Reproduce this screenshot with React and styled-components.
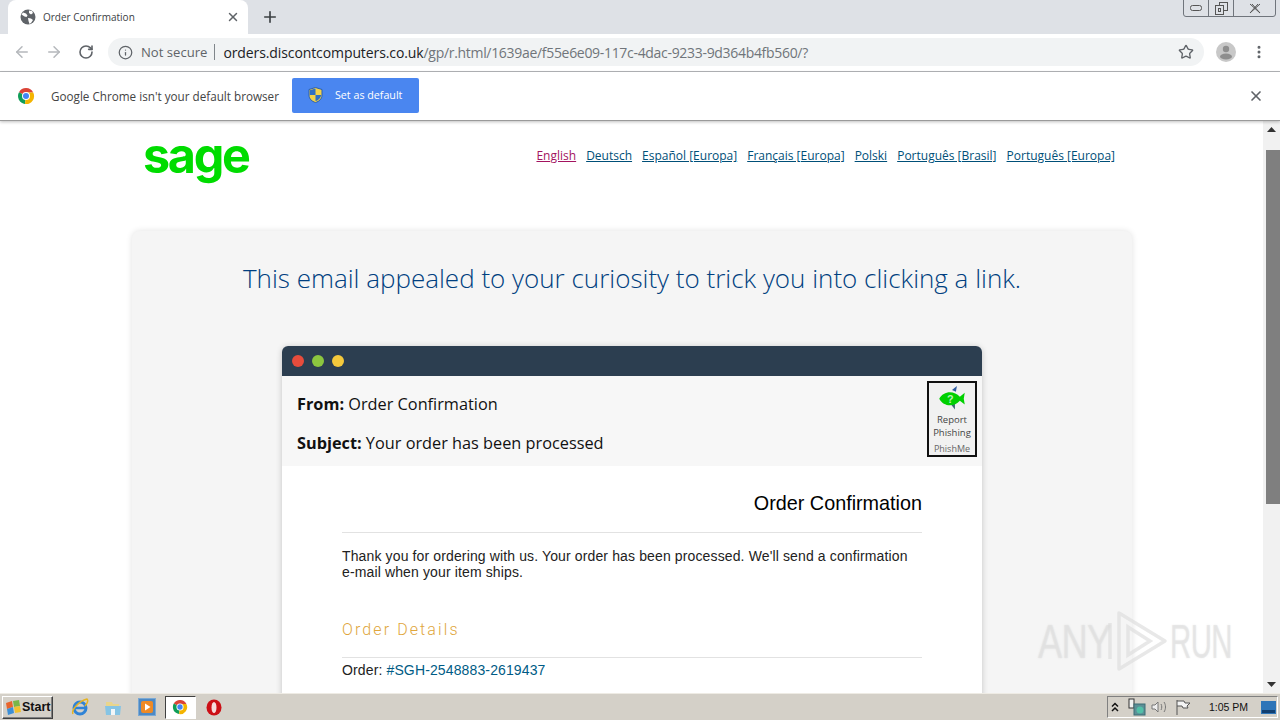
import React from "react";
import styled, { createGlobalStyle } from "styled-components";
import { ArrowLeft, ArrowRight, RotateCw, Info, Star, X, Plus, EllipsisVertical } from "lucide-react";

const Global = createGlobalStyle`
	html, body { margin: 0; padding: 0; height: 100%; overflow: hidden; background: #fff; }
	* { box-sizing: border-box; }
`;

const Screen = styled.div`
	width: 1280px;
	height: 720px;
	display: flex;
	flex-direction: column;
	overflow: hidden;
	position: relative;
	font-family: "Open Sans", sans-serif;
`;

const TabStrip = styled.div`
	height: 34px;
	flex: none;
	background: #dee1e6;
	display: flex;
	padding-left: 8px;
	position: relative;
`;
const Tab = styled.div`
	width: 240px;
	height: 34px;
	background: #fff;
	border-radius: 8px 8px 0 0;
	display: flex;
	align-items: center;
	padding: 0 8px 0 12px;
	font-size: 10px;
	color: #3c4043;
`;
const TabTitle = styled.span`
	margin-left: 7px;
	flex: 1;
`;
const NewTab = styled.div`
	width: 28px;
	margin-left: 8px;
	display: flex;
	align-items: center;
	justify-content: center;
	color: #3c4043;
`;
const WinControls = styled.div`
	position: absolute;
	top: -1px;
	right: 4px;
	width: 93px;
	height: 18px;
	border: 1px solid #70757c;
	border-radius: 0 0 3px 3px;
	display: flex;
`;
const WinButton = styled.div`
	flex: ${(p) => p.$wide ? 1.7 : 1};
	display: flex;
	align-items: center;
	justify-content: center;
	& + & { border-left: 1px solid #70757c; }
`;

const Toolbar = styled.div`
	height: 38px;
	flex: none;
	background: #fff;
	border-bottom: 1px solid #b4b6b9;
	display: flex;
	align-items: center;
	padding: 0 0 1px 12px;
`;
const NavIcon = styled.div`
	width: 20px;
	margin-right: 12px;
	display: flex;
	justify-content: center;
	color: ${(p) => p.$on ? "#5f6368" : "#b5b8bc"};
`;
const Omnibox = styled.div`
	width: 1096px;
	height: 28px;
	border-radius: 14px;
	background: #f1f3f4;
	display: flex;
	align-items: center;
	padding: 0 10px;
	font-size: 14px;
	white-space: nowrap;
`;
const NotSecure = styled.span`
	color: #5f6368;
	margin-left: 8px;
	font-size: 13.1px;
`;
const Divider = styled.span`
	width: 1px;
	height: 16px;
	background: #80868b;
	margin: 0 8px 0 7px;
`;
const Host = styled.span`
	color: #202124;
	letter-spacing: -0.1px;
`;
const UrlPath = styled.span`
	color: #70757a;
	flex: 1;
	letter-spacing: -0.31px;
`;
const Avatar = styled.div`
	width: 20px;
	height: 20px;
	margin-left: 12px;
	border-radius: 50%;
	background: #c8c8c8;
	display: flex;
	align-items: center;
	justify-content: center;
`;
const MenuDots = styled.div`
	margin-left: 15px;
	display: flex;
	color: #5f6368;
`;

const InfoBar = styled.div`
	height: 49px;
	flex: none;
	background: #fff;
	border-bottom: 1px solid #9a9a9a;
	box-shadow: 0 1px 3px rgba(0, 0, 0, 0.25);
	display: flex;
	align-items: center;
	padding: 0 16px 0 17px;
	font-size: 11.7px;
	color: #444;
	position: relative;
	z-index: 2;
`;
const InfoText = styled.span`
	margin-left: 16px;
	flex: 1;
`;
const DefaultButton = styled.div`
	position: absolute;
	left: 292px;
	top: 6px;
	width: 127px;
	height: 35px;
	border-radius: 2px;
	background: #4a86f0;
	color: #fff;
	font-size: 10.7px;
	display: flex;
	align-items: center;
	padding: 0 0 2px 16px;
	gap: 12px;
`;

const Content = styled.div`
	flex: 1;
	min-height: 0;
	display: flex;
`;
const Page = styled.div`
	flex: 1;
	min-width: 0;
	overflow: hidden;
	background: #fff;
	padding-left: 132px;
`;
const TopRow = styled.div`
	width: 1000px;
	height: 110px;
	display: flex;
	justify-content: space-between;
	align-items: flex-start;
	padding: 0 17px 0 11px;
`;
const Logo = styled.div`
	font-family: "Inter", "Liberation Sans", sans-serif;
	font-weight: 700;
	font-size: 48.5px;
	line-height: 62px;
	letter-spacing: -2.3px;
	color: #00dc00;
	margin-top: 4px;
`;
const Languages = styled.div`
	display: flex;
	gap: 10px;
	margin-top: 26px;
	font-size: 12px;
	line-height: 18px;
`;
const Language = styled.a`
	color: ${(p) => p.$active ? "#a3135f" : "#004f78"};
	text-decoration: underline;
`;
const Card = styled.div`
	width: 1000px;
	height: 640px;
	background: #f5f5f5;
	border-radius: 8px;
	box-shadow: 0 0 6px rgba(0, 0, 0, 0.12);
	padding-top: 29px;
`;
const Heading = styled.h1`
	margin: 0;
	text-align: center;
	font-weight: 300;
	font-size: 26px;
	line-height: 36px;
	color: #003f80;
`;
const Mail = styled.div`
	width: 700px;
	margin: 50px auto 0;
	background: #fff;
	border-radius: 6px 6px 0 0;
	box-shadow: 0 1px 6px rgba(0, 0, 0, 0.2);
`;
const MailBar = styled.div`
	height: 30px;
	background: #2c3e50;
	border-radius: 6px 6px 0 0;
	display: flex;
	align-items: center;
	padding: 0 0 1px 10px;
	gap: 8px;
`;
const Dot = styled.span`
	width: 12px;
	height: 12px;
	border-radius: 50%;
	background: ${(p) => p.$color};
`;
const MailHead = styled.div`
	height: 90px;
	background: #f7f7f7;
	padding: 16px 15px 0;
	position: relative;
	font-size: 16.3px;
	color: #111;
`;
const HeadLine = styled.div`
	line-height: 25px;
	margin-bottom: 14px;
	b { font-weight: 700; }
`;
const ReportBox = styled.div`
	position: absolute;
	right: 5px;
	top: 5px;
	width: 50px;
	height: 76px;
	border: 2px solid #111;
	background: #f1f1f1;
	display: flex;
	flex-direction: column;
	align-items: center;
	padding-top: 2px;
	font-size: 9.5px;
	line-height: 13.5px;
	color: #444;
	text-align: center;
	svg { display: block; margin-bottom: 2px; }
`;
const ReportFoot = styled.span`
	color: #666;
	font-size: 9px;
	margin-top: 2px;
`;
const MailBody = styled.div`
	padding: 24px 60px 0;
	font-family: "Liberation Sans", sans-serif;
	font-size: 14px;
	line-height: 16px;
	letter-spacing: 0.13px;
	color: #222;
	height: 300px;
`;
const ConfirmTitle = styled.div`
	text-align: right;
	font-size: 19.8px;
	line-height: 26px;
	letter-spacing: 0;
	color: #000;
	padding-bottom: 16px;
	border-bottom: 1px solid #e2e2e2;
`;
const Thanks = styled.p`
	margin: 15px 0 0;
`;
const SectionTitle = styled.div`
	margin-top: 40px;
	font-family: "Roboto", sans-serif;
	font-weight: 300;
	color: #e0a63c;
	font-size: 16px;
	line-height: 20px;
	letter-spacing: 2.1px;
	padding-bottom: 17px;
	border-bottom: 1px solid #e2e2e2;
`;
const OrderRow = styled.div`
	margin-top: 4px;
	a { color: #005b85; }
`;
const Scrollbar = styled.div`
	width: 17px;
	flex: none;
	background: #f1f1f1;
	display: flex;
	flex-direction: column;
	align-items: center;
	justify-content: space-between;
	position: relative;
`;
const ScrollArrow = styled.div`
	width: 17px;
	height: 17px;
	display: flex;
	align-items: center;
	justify-content: center;
`;
const ScrollThumb = styled.div`
	position: absolute;
	top: 29px;
	left: 3px;
	width: 14px;
	height: 354px;
	background: #7f7f7f;
`;
const Watermark = styled.div`
	position: absolute;
	left: 1038px;
	top: 609px;
	width: 200px;
	height: 64px;
	display: flex;
	align-items: center;
	font-family: "Liberation Sans", sans-serif;
	font-size: 49px;
	color: rgba(225, 225, 225, 0.55);
	text-shadow: 0 0 2px rgba(190, 190, 190, 0.35);
	letter-spacing: -1px;
`;
const WatermarkWord = styled.span`
	display: inline-block;
	width: ${(p) => p.$w}px;
	transform: scaleX(${(p) => p.$scale});
	transform-origin: left center;
	white-space: nowrap;
`;

const Taskbar = styled.div`
	height: 27px;
	flex: none;
	background: #d4d0c8;
	border-top: 1px solid #eeebe4;
	display: flex;
	align-items: center;
	font-family: "Liberation Sans", sans-serif;
`;
const StartButton = styled.div`
	width: 51px;
	height: 23px;
	margin-left: 2px;
	border: 1px solid;
	border-color: #fff #404040 #404040 #fff;
	box-shadow: inset -1px -1px 0 #808080;
	display: flex;
	align-items: center;
	padding-left: 2px;
	gap: 1px;
	font-weight: 700;
	font-size: 12.5px;
	color: #111;
`;
const QuickLaunch = styled.div`
	display: flex;
	align-items: center;
	margin-left: 10px;
	flex: 1;
`;
const QuickIcon = styled.div`
	width: 33.5px;
	height: 23px;
	display: flex;
	align-items: center;
	justify-content: center;
	${(p) => p.$active && "background:#fff;border:1px solid;border-color:#404040 #fff #fff #404040;margin:0 1.25px;width:31px;"}
`;
const Tray = styled.div`
	width: 171px;
	height: 22px;
	margin-right: 2px;
	border: 1px solid;
	border-color: #808080 #fff #fff #808080;
	display: flex;
	align-items: center;
	padding-left: 3px;
	font-size: 10.5px;
	color: #111;
`;
const TrayIcons = styled.div`
	display: flex;
	align-items: center;
	width: 98px;
	> svg { margin-right: 6px; }
`;
const TraySlot = styled.div`
	width: 23px;
	display: flex;
	justify-content: center;
`;
const Clock = styled.span`
	width: 52px;
`;

const Globe = () => (
	<svg width="16" height="16" viewBox="0 0 16 16">
		<circle cx="8" cy="8" r="7.5" fill="#5f6368" />
		<path d="M3 3.5l3 1 1.5 2-1 1.5-2-.5-3-2zM9 1.5l3 .5 1 2-2 1.5-2-1.5zM8 9l3 .5 2 1.5-2 3-1.5 1-1-3z" fill="#fff" />
	</svg>
);
const ChromeIcon = ({ size = 18 }) => (
	<svg width={size} height={size} viewBox="0 0 18 18">
		<path d="M9 9L2 5.2A8 8 0 0 1 16.2 5.5H9z" fill="#db4437" />
		<path d="M9 9L2 5.2A8 8 0 0 0 8 17z" fill="#0f9d58" />
		<path d="M9 9V5.5h7.2A8 8 0 0 1 8 17z" fill="#f4b400" />
		<circle cx="9" cy="9" r="4" fill="#fff" />
		<circle cx="9" cy="9" r="3" fill="#4285f4" />
	</svg>
);
const Shield = () => (
	<svg width="15" height="16" viewBox="0 0 15 16">
		<path d="M7.5.5L14 2.5V8c0 4-3 6.500-6.500 7.500C4 14.500 1 12 1 8V2.500z" fill="#f2d24a" stroke="#2b5fae" />
		<path d="M7.5 1.500V8H1.800V3.200zM7.500 8h5.700c-.2 3-2.700 5.200-5.700 6.300z" fill="#2f6fc4" />
	</svg>
);
const AvatarFigure = () => (
	<svg width="14" height="16" viewBox="0 0 14 16">
		<circle cx="7" cy="5" r="3.200" fill="#8e8e8e" />
		<ellipse cx="7" cy="12.500" rx="6" ry="3" fill="#8e8e8e" />
	</svg>
);
const Fish = () => (
	<svg width="30" height="26" viewBox="0 0 30 26">
		<path d="M15 5l5-4-1 6z" fill="#2c5aa0" />
		<path d="M14 20l4 5 0-6z" fill="#3a6a70" />
		<path d="M2 14C6 6 17 5 23 12l5-4-1 6 1 6-5-4C17 23 6 22 2 14z" fill="#00d000" />
		<text x="10" y="18" fontSize="11" fontWeight="700" fill="#b8f0b8" fontFamily="Liberation Sans">?</text>
	</svg>
);
const FlagLogo = () => (
	<svg width="16" height="15" viewBox="0 0 16 15">
		<path d="M1 3l6-2 1 6-6 2z" fill="#e8642c" />
		<path d="M8 1l6-1 1 6-6 1z" fill="#7ab648" />
		<path d="M2 9l6-2 1 6-6 2z" fill="#3d8fd6" />
		<path d="M9 7l6-1 1 6-6 1z" fill="#f2c12e" />
	</svg>
);
const IEIcon = () => (
	<svg width="18" height="18" viewBox="0 0 18 18">
		<circle cx="9" cy="10" r="6" fill="none" stroke="#2f83d6" strokeWidth="3" />
		<path d="M3 10h12" stroke="#2f83d6" strokeWidth="2.500" />
		<path d="M2 16C0 12 8 3 16 1c2 2-1 6-2 7" fill="none" stroke="#e6b422" strokeWidth="1.500" />
	</svg>
);
const FolderIcon = () => (
	<svg width="18" height="18" viewBox="0 0 18 18">
		<path d="M2 4h6l1 2h6v10H2z" fill="#e9d58c" />
		<path d="M1 8h16l-1 9H2z" fill="#86c4e4" />
		<rect x="7" y="11" width="4" height="6" fill="#f2f6f8" />
	</svg>
);
const MediaIcon = () => (
	<svg width="18" height="18" viewBox="0 0 18 18">
		<rect x="0.500" y="0.500" width="17" height="17" fill="#4d89c4" stroke="#7ba9d4" />
		<rect x="3" y="3" width="12" height="12" rx="2" fill="#ee8a25" />
		<path d="M7 5.500v7l5.500-3.500z" fill="#fff" />
	</svg>
);
const OperaIcon = () => (
	<svg width="16" height="17" viewBox="0 0 16 17">
		<ellipse cx="8" cy="8.500" rx="7.500" ry="8" fill="#cc0f16" />
		<ellipse cx="8" cy="8.500" rx="2.500" ry="5.500" fill="#f6dcdc" />
	</svg>
);
const TrayChevrons = () => (
	<svg width="8" height="10" viewBox="0 0 8 10" fill="none" stroke="#111" strokeWidth="1.500">
		<path d="M1 4.500l3-3 3 3M1 9l3-3 3 3" />
	</svg>
);
const TrayNet = () => (
	<svg width="18" height="18" viewBox="0 0 18 18">
		<rect x="1" y="1" width="5" height="9" fill="#f2f2f2" stroke="#333" />
		<rect x="6" y="6" width="11" height="11" fill="#5c8f96" stroke="#3b6d75" />
		<circle cx="12" cy="12" r="3.500" fill="#52c0a8" />
	</svg>
);
const TraySound = () => (
	<svg width="17" height="16" viewBox="0 0 17 16" fill="none" stroke="#777">
		<path d="M1 6h3l3-3v10l-3-3H1z" fill="#eee" />
		<path d="M10 5c1 2 1 4 0 6M13 3c2 3 2 7 0 10" />
	</svg>
);
const TrayFlag = () => (
	<svg width="16" height="17" viewBox="0 0 16 17" fill="none" stroke="#555">
		<path d="M2 1v15M2 2h7l1 2h5l-3 3 1 2H8L7 7H2" fill="#f4f4f4" />
	</svg>
);
const ShowDesktop = () => (
	<svg width="15" height="13" viewBox="0 0 15 13">
		<rect width="15" height="13" fill="#2e75b8" />
		<rect x="1" y="9" width="13" height="3" fill="#123f70" />
	</svg>
);
const Triangle = ({ down }) => (
	<svg width="9" height="5" viewBox="0 0 9 5">
		<path d={down ? "M0 0h9L4.500 5z" : "M0 5h9L4.500 0z"} fill="#333" />
	</svg>
);
const PlayMark = () => (
	<svg width="63" height="64" viewBox="0 0 63 64" fill="none" stroke="rgba(222,222,222,0.7)" strokeWidth="3.500">
		<path d="M12 4v56l46-28z" strokeLinejoin="round" />
		<path d="M3 14v36M21 18v28l22-14z" />
	</svg>
);

const languages = ["English", "Deutsch", "Español [Europa]", "Français [Europa]", "Polski", "Português [Brasil]", "Português [Europa]"];

export default function App() {
	return (
		<Screen>
			<Global />
			<TabStrip>
				<Tab>
					<Globe />
					<TabTitle>Order Confirmation</TabTitle>
					<X size={14} strokeWidth={2.500} color="#5f6368" />
				</Tab>
				<NewTab><Plus size={18} strokeWidth={2.200} /></NewTab>
				<WinControls>
					<WinButton>
						<svg width="12" height="6"><rect x="0.500" y="0.500" width="11" height="5" rx="2" fill="none" stroke="#555" /></svg>
					</WinButton>
					<WinButton>
						<svg width="13" height="13" fill="none" stroke="#555"><rect x="4.500" y="0.500" width="8" height="8" /><rect x="0.500" y="3.500" width="8" height="9" fill="#dee1e6" /><rect x="3.500" y="6.500" width="2" height="3" /></svg>
					</WinButton>
					<WinButton $wide>
						<svg width="12" height="11" fill="none" stroke="#555"><path d="M1 1l10 9M11 1L1 10M3 1l8 9M9 1l-8 9" /></svg>
					</WinButton>
				</WinControls>
			</TabStrip>
			<Toolbar>
				<NavIcon><ArrowLeft size={18} /></NavIcon>
				<NavIcon><ArrowRight size={18} /></NavIcon>
				<NavIcon $on><RotateCw size={16} strokeWidth={2.400} /></NavIcon>
				<Omnibox>
					<Info size={15} color="#5f6368" />
					<NotSecure>Not secure</NotSecure>
					<Divider />
					<Host>orders.discontcomputers.co.uk</Host>
					<UrlPath>/gp/r.html/1639ae/f55e6e09-117c-4dac-9233-9d364b4fb560/?</UrlPath>
					<Star size={16} color="#5f6368" strokeWidth={2} />
				</Omnibox>
				<Avatar><AvatarFigure /></Avatar>
				<MenuDots><EllipsisVertical size={16} strokeWidth={2.500} /></MenuDots>
			</Toolbar>
			<InfoBar>
				<ChromeIcon />
				<InfoText>Google Chrome isn't your default browser</InfoText>
				<DefaultButton><Shield /><span>Set as default</span></DefaultButton>
				<X size={16} strokeWidth={2.500} color="#5f6368" />
			</InfoBar>
			<Content>
				<Page>
					<TopRow>
						<Logo>sage</Logo>
						<Languages>
							{languages.map((l, i) => (
								<Language key={l} $active={i === 0}>{l}</Language>
							))}
						</Languages>
					</TopRow>
					<Card>
						<Heading>This email appealed to your curiosity to trick you into clicking a link.</Heading>
						<Mail>
							<MailBar>
								<Dot $color="#e74c3c" />
								<Dot $color="#8cc63f" />
								<Dot $color="#f4c93c" />
							</MailBar>
							<MailHead>
								<HeadLine><b>From:</b> Order Confirmation</HeadLine>
								<HeadLine><b>Subject:</b> Your order has been processed</HeadLine>
								<ReportBox>
									<Fish />
									<span>Report</span>
									<span>Phishing</span>
									<ReportFoot>PhishMe</ReportFoot>
								</ReportBox>
							</MailHead>
							<MailBody>
								<ConfirmTitle>Order Confirmation</ConfirmTitle>
								<Thanks>Thank you for ordering with us. Your order has been processed. We'll send a confirmation e&#8209;mail when your item ships.</Thanks>
								<SectionTitle>Order Details</SectionTitle>
								<OrderRow>Order: <a>#SGH-2548883-2619437</a></OrderRow>
							</MailBody>
						</Mail>
					</Card>
				</Page>
				<Scrollbar>
					<ScrollArrow><Triangle /></ScrollArrow>
					<ScrollThumb />
					<ScrollArrow><Triangle down /></ScrollArrow>
				</Scrollbar>
			</Content>
			<Taskbar>
				<StartButton><FlagLogo />Start</StartButton>
				<QuickLaunch>
					<QuickIcon><IEIcon /></QuickIcon>
					<QuickIcon><FolderIcon /></QuickIcon>
					<QuickIcon><MediaIcon /></QuickIcon>
					<QuickIcon $active><ChromeIcon size={16} /></QuickIcon>
					<QuickIcon><OperaIcon /></QuickIcon>
				</QuickLaunch>
				<Tray>
					<TrayIcons>
						<TrayChevrons />
						<TraySlot><TrayNet /></TraySlot>
						<TraySlot><TraySound /></TraySlot>
						<TraySlot><TrayFlag /></TraySlot>
					</TrayIcons>
					<Clock>1:05 PM</Clock>
					<ShowDesktop />
				</Tray>
			</Taskbar>
			<Watermark>
				<WatermarkWord $w={69} $scale={0.74}>ANY</WatermarkWord>
				<PlayMark />
				<WatermarkWord $w={62} $scale={0.6}>RUN</WatermarkWord>
			</Watermark>
		</Screen>
	);
}
